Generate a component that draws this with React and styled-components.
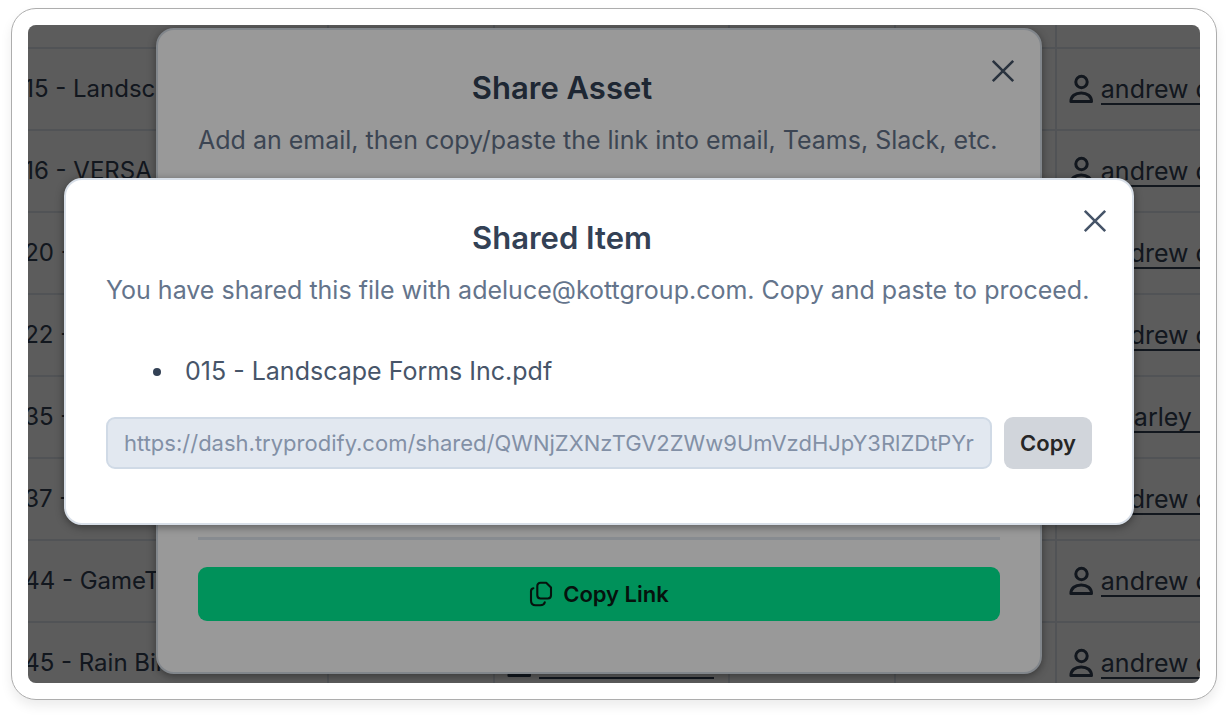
import React from 'react';
import styled, { createGlobalStyle } from 'styled-components';

const GlobalStyle = createGlobalStyle`
  *, *::before, *::after { box-sizing: border-box; }
  body {
    margin: 0;
    background: #fff;
    color: #334155;
    font-family: Inter, "Liberation Sans", sans-serif;
  }
  button, input { font-family: inherit; }
`;

const Page = styled.main`
  display: flex;
  min-height: 100vh;
  padding: 8px 11px 15px;
`;

const Frame = styled.div`
  flex: 1;
  display: flex;
  min-width: 0;
  padding: 16px;
  border: 1px solid #adadad;
  border-radius: 25px;
  background: #fff;
  box-shadow: 0 6px 12px rgba(0, 0, 0, 0.08);
`;

const Screen = styled.div`
  flex: 1;
  min-width: 0;
  display: grid;
  grid-template: minmax(0, 1fr) / minmax(0, 1fr);
  position: relative;
  overflow: hidden;
  border-radius: 8px;
`;

const Backdrop = styled.div`
  position: absolute;
  inset: 0;
  overflow: hidden;
`;

const Table = styled.table`
  width: 100%;
  table-layout: fixed;
  border-collapse: collapse;
  margin-top: -59px;
`;

const Column = styled.col`
  width: ${({ $width }) => $width};
`;

const Cell = styled.td`
  height: 82px;
  padding: 0 0 0 12px;
  border-bottom: 2px solid #e2e8f0;
  border-right: 2px solid #e2e8f0;
  font-size: 24px;
  line-height: 32px;
  white-space: nowrap;
  overflow: hidden;

  &:last-child { border-right: 0; }
`;

const FileCell = styled(Cell)`
  padding: 0;
  text-indent: -19px;
`;

const Owner = styled.div`
  display: flex;
  align-items: center;
  gap: 8px;
`;

const OwnerLink = styled.a`
  flex: none;
  padding-top: 2px;
  border-bottom: 2px solid #334155;
  color: inherit;
  font-size: 25px;
  line-height: 28px;
  text-decoration: none;
`;

const Layer = styled.div`
  grid-area: 1 / 1;
  z-index: 1;
  display: flex;
  align-items: ${({ $align }) => $align};
  padding: ${({ $padding }) => $padding};
  background: rgba(0, 0, 0, 0.4);
`;

const Modal = styled.section`
  position: relative;
  flex: 1;
  min-width: 0;
  display: flex;
  flex-direction: column;
  padding: 40px 40px ${({ $bottom }) => $bottom}px;
  border: 2px solid #d8dfe8;
  border-radius: 18px;
  background: #fff;
  box-shadow: 0 2px 8px rgba(0, 0, 0, 0.4);
`;

const Title = styled.h2`
  margin: 0;
  padding-right: 74px;
  font-size: 31px;
  font-weight: 600;
  line-height: 36px;
  text-align: center;
`;

const Description = styled.p`
  margin: 16px 0 0;
  color: #64748b;
  font-size: 25px;
  line-height: 36px;
  white-space: nowrap;
`;

const CloseButton = styled.button`
  position: absolute;
  top: 28px;
  right: 24px;
  display: grid;
  padding: 0;
  border: 0;
  background: none;
  color: #475569;
  cursor: pointer;
`;

const FileList = styled.ul`
  margin: 45px 0 0;
  padding-left: 70px;
  font-size: 25px;
  line-height: 36px;
`;

const FileName = styled.span`
  padding-left: 9px;
  color: #475569;
`;

const LinkRow = styled.div`
  display: flex;
  gap: 12px;
  margin-top: 28px;
`;

const LinkInput = styled.input`
  flex: 1;
  min-width: 0;
  height: 52px;
  padding: 0 16px;
  border: 2px solid #d0dae6;
  border-radius: 9px;
  background: #e2e8f0;
  color: #8290a6;
  font-size: 22px;
`;

const CopyButton = styled.button`
  width: 88px;
  height: 52px;
  padding: 0;
  border: 0;
  border-radius: 9px;
  background: #d1d5db;
  color: #262626;
  font-size: 22px;
  font-weight: 600;
  cursor: pointer;
`;

const Divider = styled.hr`
  width: 100%;
  margin: auto 0 27px;
  border: 0;
  border-top: 3px solid #e2e8f0;
`;

const CopyLinkButton = styled.button`
  display: flex;
  align-items: center;
  justify-content: center;
  gap: 10px;
  height: 54px;
  border: 0;
  border-radius: 9px;
  background: #00f296;
  color: #0a1f16;
  font-size: 22px;
  font-weight: 600;
  cursor: pointer;
`;

const Icon = styled.svg`
  flex: none;
  fill: none;
  stroke: currentColor;
  stroke-linejoin: round;
`;

const CloseIcon = () => (
  <Icon width="26" height="26" viewBox="0 0 26 26" strokeWidth="2.6" aria-hidden="true">
    <path d="M2.800 2.800 23.200 23.200M23.200 2.800 2.800 23.200" />
  </Icon>
);

const PersonIcon = () => (
  <Icon width="24" height="30" viewBox="0 0 24 30" strokeWidth="3" aria-hidden="true">
    <circle cx="12.5" cy="8" r="5.7" />
    <path d="M1.900 27.500c0-5.200 4.200-8.600 10.300-8.600s10.300 3.400 10.300 8.600Z" />
  </Icon>
);

const CopyIcon = () => (
  <Icon width="24" height="26" viewBox="0 0 24 26" strokeWidth="2.1" strokeLinecap="round" aria-hidden="true">
    <path d="M11.5 1.8h5.7L22 6.6v7.7c0 2-1.2 3.2-3.2 3.2h-7.3c-2 0-3.2-1.2-3.2-3.2V5c0-2 1.2-3.2 3.2-3.2Z" />
    <path d="M4.4 7.2C2.8 7.5 2 8.6 2 10.2v9.3c0 3 1.5 4.7 4.6 4.7h4.7c2.6 0 4-1 4.5-3" />
  </Icon>
);

const OwnerTag = ({ name }) => (
  <Owner>
    <PersonIcon />
    <OwnerLink href="#owner">{name}</OwnerLink>
  </Owner>
);

const rows = [
  {},
  { file: '015 - Landscape', owner: 'andrew d' },
  { file: '016 - VERSA', owner: 'andrew d' },
  { file: '020 -', owner: 'andrew d' },
  { file: '022 -', owner: 'andrew d' },
  { file: '035 -', owner: 'Charley h' },
  { file: '037 -', owner: 'andrew d' },
  { file: '044 - GameTime', owner: 'andrew d' },
  { file: '045 - Rain Bird', editor: 'andrew deluce', owner: 'andrew d' },
];

const columnWidths = ['25.6%', '14.2%', '20%', '14.2%', '13.7%', '12.3%'];

export default function App() {
  return (
    <>
      <GlobalStyle />
      <Page>
        <Frame>
          <Screen>
            <Backdrop>
              <Table>
                <colgroup>
                  {columnWidths.map((width, i) => <Column key={i} $width={width} />)}
                </colgroup>
                <tbody>
                  {rows.map(({ file, editor, owner }, i) => (
                    <tr key={i}>
                      <FileCell>{file}</FileCell>
                      <Cell />
                      <Cell>{editor && <OwnerTag name={editor} />}</Cell>
                      <Cell />
                      <Cell />
                      <Cell>{owner && <OwnerTag name={owner} />}</Cell>
                    </tr>
                  ))}
                </tbody>
              </Table>
            </Backdrop>

            <Layer $align="stretch" $padding="3px 158px 9px 128px">
              <Modal $bottom={51} role="dialog" aria-labelledby="share-title">
                <Title id="share-title">Share Asset</Title>
                <Description>Add an email, then copy/paste the link into email, Teams, Slack, etc.</Description>
                <CloseButton type="button" aria-label="Close share asset"><CloseIcon /></CloseButton>
                <Divider />
                <CopyLinkButton type="button"><CopyIcon />Copy Link</CopyLinkButton>
              </Modal>
            </Layer>

            <Layer $align="center" $padding="0 66px 5px 36px">
              <Modal $bottom={54} role="dialog" aria-modal="true" aria-labelledby="shared-title">
                <Title id="shared-title">Shared Item</Title>
                <Description>You have shared this file with adeluce@kottgroup.com. Copy and paste to proceed.</Description>
                <CloseButton type="button" aria-label="Close shared item"><CloseIcon /></CloseButton>
                <FileList>
                  <li><FileName>015 - Landscape Forms Inc.pdf</FileName></li>
                </FileList>
                <LinkRow>
                  <LinkInput
                    readOnly
                    aria-label="Shared link"
                    value="https://dash.tryprodify.com/shared/QWNjZXNzTGV2ZWw9UmVzdHJpY3RlZDtPYr"
                  />
                  <CopyButton type="button">Copy</CopyButton>
                </LinkRow>
              </Modal>
            </Layer>
          </Screen>
        </Frame>
      </Page>
    </>
  );
}
